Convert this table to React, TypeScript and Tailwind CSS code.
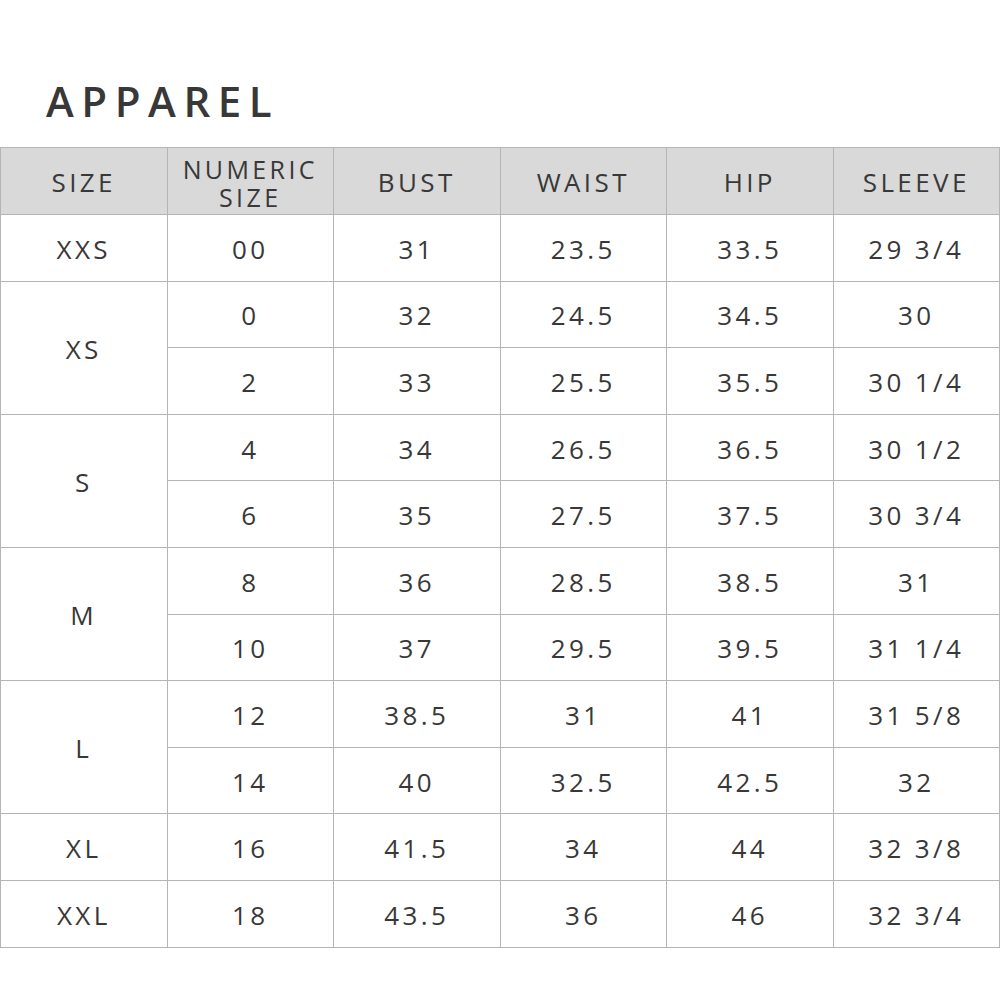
const rows: { size?: string; span?: number; num: string; bust: string; waist: string; hip: string; sleeve: string }[] = [
  { size: 'XXS', span: 1, num: '00', bust: '31', waist: '23.5', hip: '33.5', sleeve: '29 3/4' },
  { size: 'XS', span: 2, num: '0', bust: '32', waist: '24.5', hip: '34.5', sleeve: '30' },
  { num: '2', bust: '33', waist: '25.5', hip: '35.5', sleeve: '30 1/4' },
  { size: 'S', span: 2, num: '4', bust: '34', waist: '26.5', hip: '36.5', sleeve: '30 1/2' },
  { num: '6', bust: '35', waist: '27.5', hip: '37.5', sleeve: '30 3/4' },
  { size: 'M', span: 2, num: '8', bust: '36', waist: '28.5', hip: '38.5', sleeve: '31' },
  { num: '10', bust: '37', waist: '29.5', hip: '39.5', sleeve: '31 1/4' },
  { size: 'L', span: 2, num: '12', bust: '38.5', waist: '31', hip: '41', sleeve: '31 5/8' },
  { num: '14', bust: '40', waist: '32.5', hip: '42.5', sleeve: '32' },
  { size: 'XL', span: 1, num: '16', bust: '41.5', waist: '34', hip: '44', sleeve: '32 3/8' },
  { size: 'XXL', span: 1, num: '18', bust: '43.5', waist: '36', hip: '46', sleeve: '32 3/4' },
];

const cell = 'border border-[#b5b5b5] text-center align-middle pt-[3px]';

export default function App() {
  return (
    <div className="w-[1000px] h-[1000px] bg-white text-[#383838] font-['Open_Sans',sans-serif]">
      <h1 className="pl-[46px] pt-[76px] pb-[21px] text-[42px] leading-[50px] font-semibold tracking-[0.18em]">APPAREL</h1>
      <table className="w-[1000px] border-collapse table-fixed text-[26px] tracking-[0.13em]">
        <thead>
          <tr className="h-[67px] bg-[#d9d9d9]">
            <th className={`${cell} font-normal`}>SIZE</th>
            <th className={`${cell} font-normal text-[25px]`}>
              <div className="leading-[24px]">NUMERIC</div>
              <div className="leading-[24px] mt-[4px]">SIZE</div>
            </th>
            <th className={`${cell} font-normal`}>BUST</th>
            <th className={`${cell} font-normal`}>WAIST</th>
            <th className={`${cell} font-normal`}>HIP</th>
            <th className={`${cell} font-normal`}>SLEEVE</th>
          </tr>
        </thead>
        <tbody>
          {rows.map((r, i) => (
            <tr key={i} className="h-[66.6px]">
              {r.size && <td rowSpan={r.span} className={cell}>{r.size}</td>}
              <td className={cell}>{r.num}</td>
              <td className={cell}>{r.bust}</td>
              <td className={cell}>{r.waist}</td>
              <td className={cell}>{r.hip}</td>
              <td className={cell}>{r.sleeve}</td>
            </tr>
          ))}
        </tbody>
      </table>
    </div>
  );
}
